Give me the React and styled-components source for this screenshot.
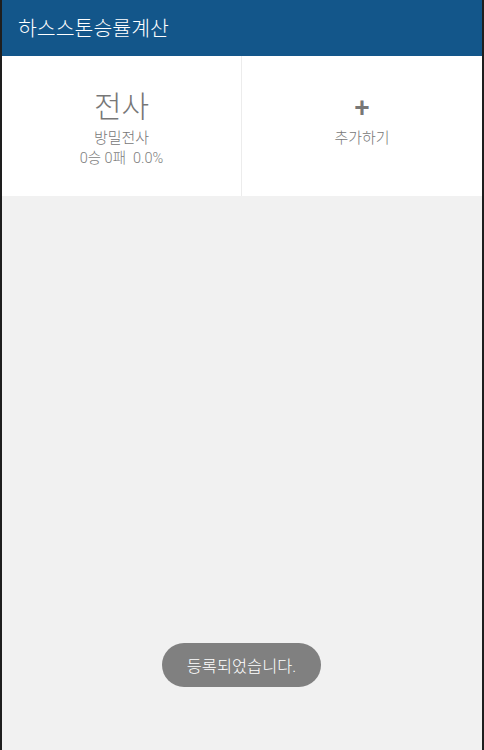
import React from "react";
import styled, { createGlobalStyle } from "styled-components";

const Global = createGlobalStyle`
  html, body { margin: 0; padding: 0; background: #1e1e1e; }
  * { box-sizing: border-box; }
  body { font-family: Roboto, "Noto Sans CJK KR", sans-serif; }
`;

const Screen = styled.div`
  position: relative;
  width: 484px;
  height: 750px;
  border-left: 2px solid #1e1e1e;
  border-right: 2px solid #1e1e1e;
  background: #f1f1f1;
  display: flex;
  flex-direction: column;
  overflow: hidden;
`;

const AppBar = styled.header`
  height: 56px;
  background: #13568a;
  display: flex;
  align-items: center;
  padding: 0 16px 2px;
  color: #fff;
  font-size: 20.5px;
  font-weight: 300;
`;

const Grid = styled.div`
  display: grid;
  grid-template-columns: 1fr 1fr;
  height: 140px;
  background: #fff;
`;

const Card = styled.div`
  display: flex;
  flex-direction: column;
  align-items: center;
  padding-top: ${(p) => p.$pt}px;
  border-right: ${(p) => (p.$divider ? "1px solid #ececec" : "none")};
  color: #777;
`;

const ClassName = styled.div`
  font-size: 30px;
  font-weight: 300;
  line-height: 36px;
  color: #777;
`;

const DeckName = styled.div`
  font-size: 15px;
  font-weight: 300;
  line-height: 22px;
  margin-top: 2px;
  color: #777;
`;

const Stats = styled.div`
  font-size: 14.5px;
  font-weight: 300;
  line-height: 18px;
  margin-top: 1px;
  color: #7e7e7e;
  white-space: pre;
`;

const Plus = styled.div`
  font-size: 27px;
  font-weight: 500;
  line-height: 34px;
  color: #777;
`;

const Toast = styled.div`
  position: absolute;
  left: 160px;
  top: 643px;
  width: 159px;
  height: 44px;
  border-radius: 22px;
  background: #808080;
  color: #fff;
  font-size: 16.4px;
  font-weight: 300;
  display: flex;
  align-items: center;
  justify-content: center;
`;

export default function App() {
  return (
    <>
      <Global />
      <Screen>
        <AppBar>하스스톤승률계산</AppBar>
        <Grid>
          <Card $divider $pt={33}>
            <ClassName>전사</ClassName>
            <DeckName>방밀전사</DeckName>
            <Stats>0승 0패  0.0%</Stats>
          </Card>
          <Card $pt={35}>
            <Plus>+</Plus>
            <DeckName>추가하기</DeckName>
          </Card>
        </Grid>
        <Toast>등록되었습니다.</Toast>
      </Screen>
    </>
  );
}
